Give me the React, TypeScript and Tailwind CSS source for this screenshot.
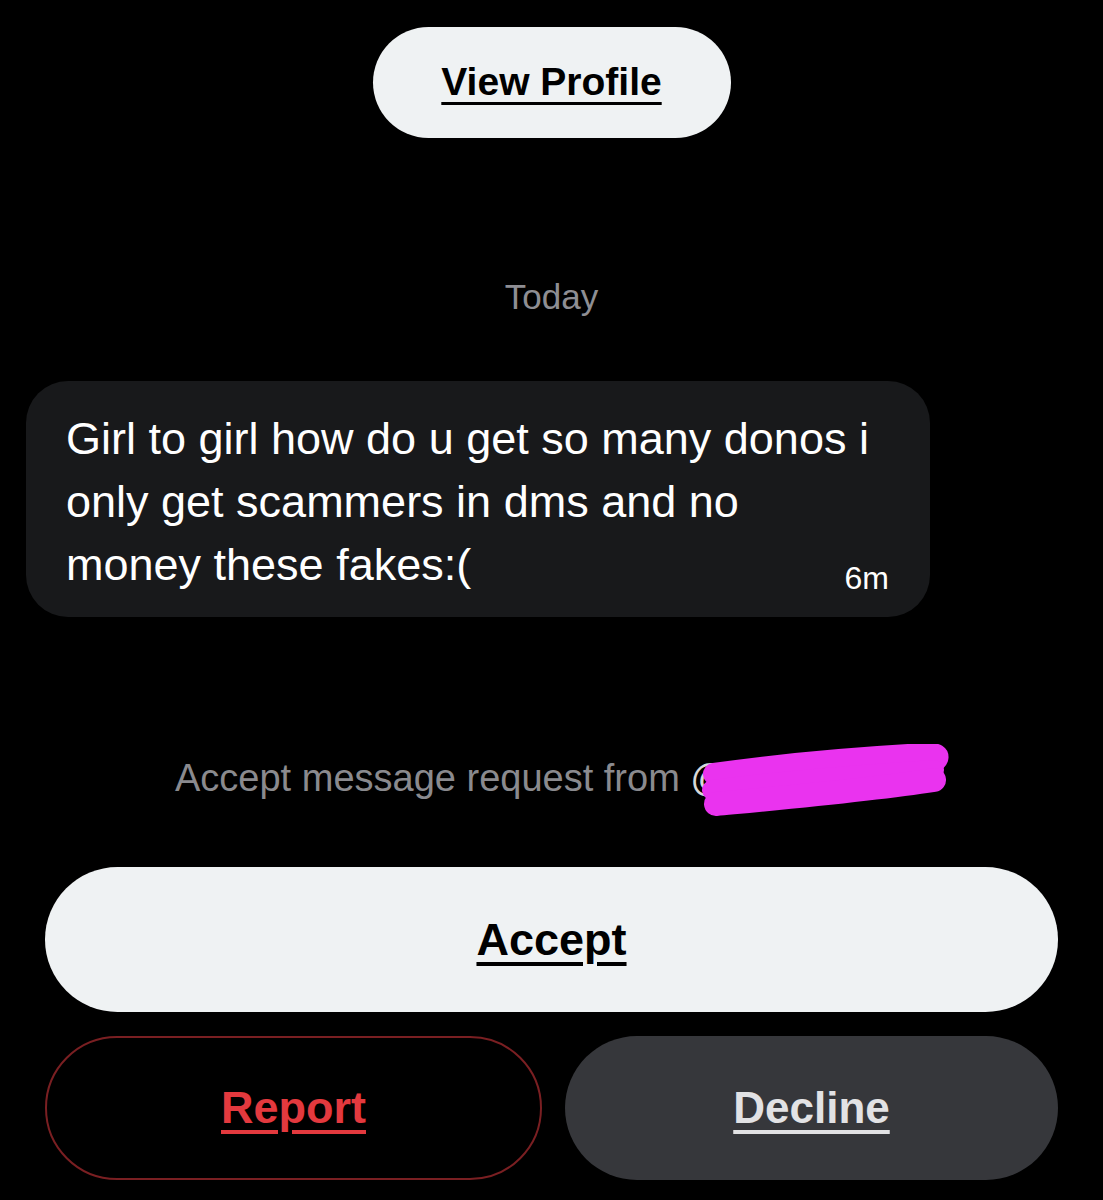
import React from 'react';

const font = { fontFamily: '"Liberation Sans", Arial, sans-serif' };

function Scribble() {
  return (
    <svg
      className="absolute left-[700px] top-[-12px]"
      width="258"
      height="76"
      viewBox="0 0 258 76"
      fill="none"
    >
      <path
        d="M14 30 C70 22 150 14 226 10 C236 9 240 12 236 16"
        stroke="#ea33ef"
        strokeWidth="22"
        strokeLinecap="round"
      />
      <path d="M12 46 C90 36 170 30 234 26" stroke="#ea33ef" strokeWidth="20" strokeLinecap="round" />
      <path
        d="M16 60 C80 54 170 46 234 36"
        stroke="#ea33ef"
        strokeWidth="24"
        strokeLinecap="round"
      />
    </svg>
  );
}

export default function App() {
  return (
    <div className="w-[1103px] h-[1200px] bg-black overflow-hidden flex flex-col" style={font}>
      <button className="mt-[27px] mx-auto h-[111px] w-[358px] rounded-full bg-[#eff2f3] flex items-center justify-center">
        <span className="text-[39px] font-bold text-black underline decoration-[3px] underline-offset-[7px]">
          View Profile
        </span>
      </button>

      <div className="mt-[139px] h-[40px] leading-[40px] text-center text-[35px] text-[#8e8e93]">Today</div>

      <div className="mt-[64px] ml-[26px] w-[904px] h-[236px] rounded-[42px] bg-[#18191b] pl-[40px] pt-[26px]">
        <p className="w-[812px] text-[45px] leading-[63px] text-white">
          Girl to girl how do u get so many donos i only get scammers in dms and no money these fakes:(
          <span className="float-right -mr-[11px] mt-[27px] text-[32px] leading-[36px]">6m</span>
        </p>
      </div>

      <div className="mt-[139px] h-[44px] pl-[175px] relative flex items-center text-[38px] leading-[44px] text-[#8a8a8e]">
        <span className="whitespace-pre">Accept message request from </span>
        <span className="text-[#d8d8d8]">@</span>
        <Scribble />
      </div>

      <button className="mt-[67px] mx-[45px] h-[145px] rounded-full bg-[#eff2f3] flex items-center justify-center">
        <span className="text-[45px] font-bold text-black underline decoration-[4px] underline-offset-[7px]">
          Accept
        </span>
      </button>

      <div className="mt-[24px] mx-[45px] h-[144px] flex gap-[23px]">
        <button className="flex-1 rounded-full border-2 border-[#7a1f22] flex items-center justify-center">
          <span className="text-[45px] font-bold text-[#e3393e] underline decoration-[4px] underline-offset-[7px]">
            Report
          </span>
        </button>
        <button className="flex-1 rounded-full bg-[#36373b] flex items-center justify-center">
          <span className="text-[44px] font-bold text-[#e2e2e4] underline decoration-[4px] underline-offset-[7px]">
            Decline
          </span>
        </button>
      </div>
    </div>
  );
}
